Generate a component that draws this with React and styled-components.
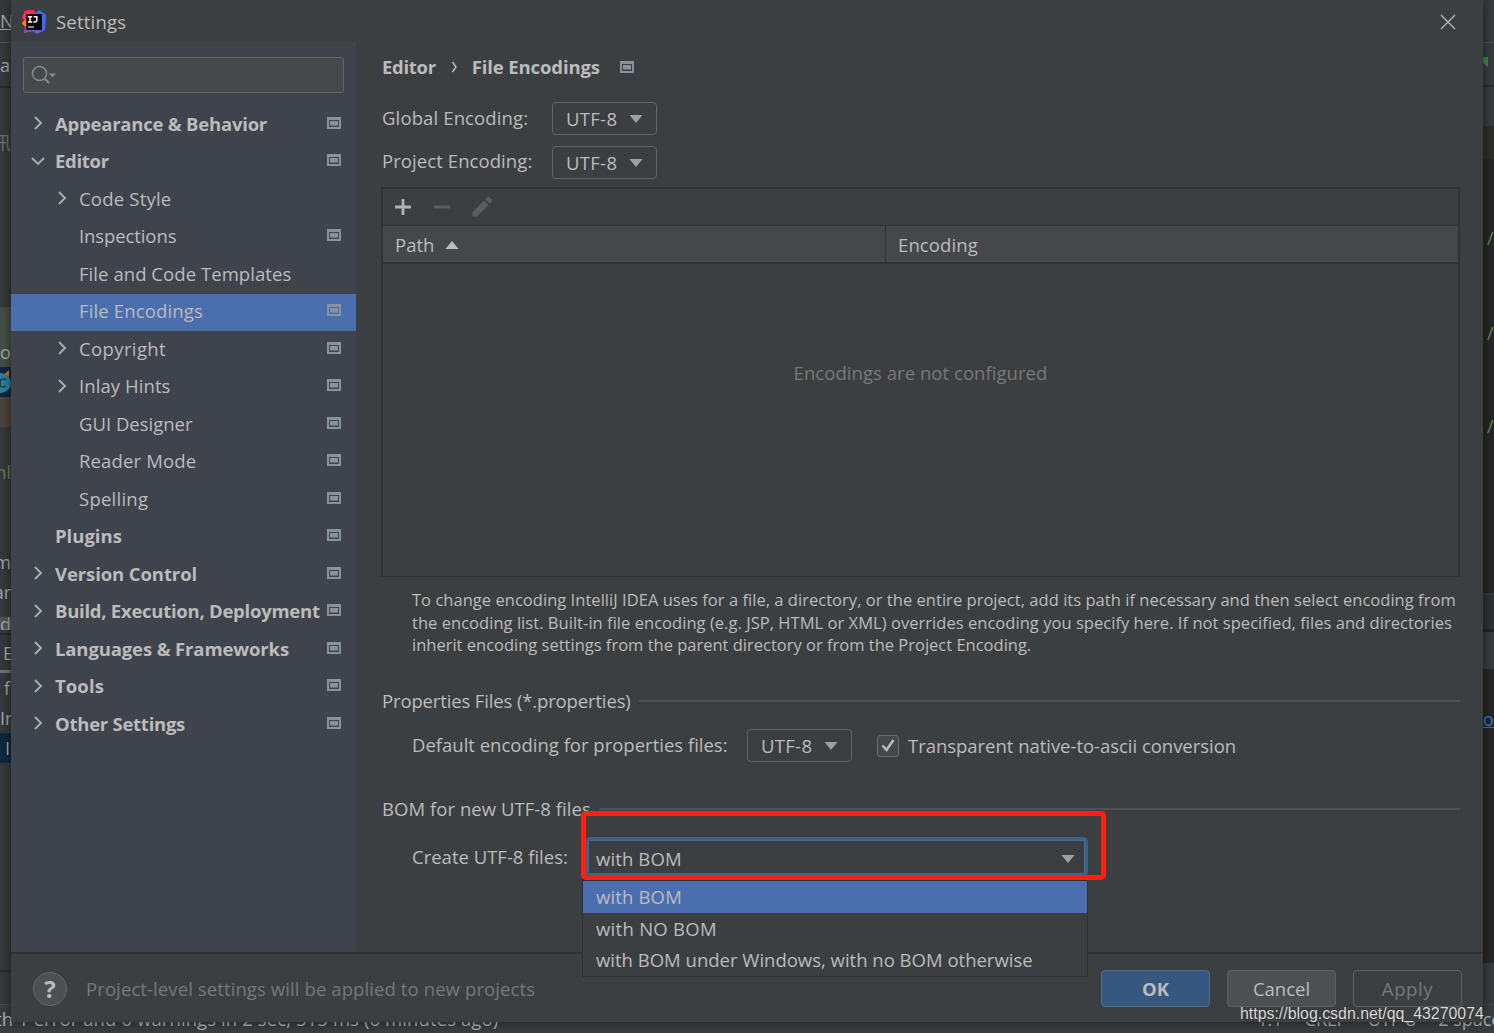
import React from 'react';
import styled, { createGlobalStyle } from 'styled-components';

const GlobalStyle = createGlobalStyle`
  * {
    box-sizing: border-box;
  }
  body {
    margin: 0;
    overflow: hidden;
    background: #3c3f41;
    color: #bbbbbb;
    font: 18.5px/24px 'Open Sans', 'Noto Sans', 'Noto Sans CJK SC', sans-serif;
  }
`;

/* Editor window behind the dialog */

const Ide = styled.div`
  position: relative;
  display: flex;
  flex-direction: column;
  width: 1494px;
  height: 1033px;
  overflow: hidden;
`;

const IdeBody = styled.div`
  display: flex;
  justify-content: space-between;
  height: 1004px;
`;

const Strip = styled.div`
  width: ${props => props.$width}px;
  overflow: hidden;
  background: ${props => props.$bg};
`;

const Band = styled.div`
  display: flex;
  align-items: center;
  justify-content: ${props => (props.$right ? 'flex-end' : 'flex-start')};
  height: ${props => props.$h}px;
  padding-left: ${props => props.$pad || 0}px;
  background: ${props => props.$bg || 'transparent'};
  color: ${props => props.$color || '#a5a7a8'};
  font-size: 18px;
  white-space: nowrap;
  overflow: hidden;
`;

const StatusBar = styled.div`
  display: flex;
  justify-content: space-between;
  height: 29px;
  padding-top: 2px;
  border-top: 1px solid #484a4b;
  background: #3a3d3f;
  color: #aeb0b1;
  font-size: 18px;
  white-space: nowrap;
`;

const StatusMessage = styled.span`
  margin-left: -5px;
  font-size: 18.5px;
  letter-spacing: 0.1px;
`;

const StatusCells = styled.span`
  display: flex;
  gap: 22px;
  margin-right: -16px;
`;

/* Dialog */

const Dialog = styled.div`
  position: absolute;
  top: 0;
  left: 11px;
  display: flex;
  flex-direction: column;
  width: 1472px;
  height: 1022px;
  background: #3c3f41;
  box-shadow: 0 0 10px rgba(0, 0, 0, 0.55);
`;

const TitleBar = styled.div`
  display: flex;
  align-items: center;
  height: 42px;
  padding: 1px 27px 0 11px;
`;

const Title = styled.span`
  flex: 1;
  padding-top: 1px;
  margin-left: 10px;
  letter-spacing: 0.2px;
`;

const Main = styled.div`
  display: flex;
  height: 910px;
`;

const Sidebar = styled.div`
  width: 345px;
  padding-top: 15px;
  background: #3f434c;
`;

const SearchBox = styled.div`
  display: flex;
  align-items: center;
  width: 321px;
  height: 36px;
  margin: 0 0 13px 12px;
  padding-left: 7px;
  border: 1px solid #646464;
  border-radius: 3px;
  background: #45494a;
`;

const TreeRow = styled.div`
  display: flex;
  align-items: center;
  height: 37.5px;
  padding: 0 15px 0 ${props => (props.$child ? 44 : 20)}px;
  background: ${props => (props.$selected ? '#4b6eaf' : 'transparent')};
  font-weight: ${props => (props.$child ? 400 : 700)};
  white-space: nowrap;
`;

const TreeArrow = styled.span`
  display: flex;
  width: 24px;
  padding-bottom: 3px;
`;

const TreeLabel = styled.span`
  flex: 1;
  padding-bottom: 2px;
  letter-spacing: ${props => props.$track || 0}px;
`;

const TreeScope = styled.span`
  display: flex;
  padding-bottom: 4px;
`;

const Page = styled.div`
  flex: 1;
  padding: 13px 23px 0 26px;
`;

const Breadcrumb = styled.div`
  display: flex;
  align-items: center;
  height: 24px;
  margin-bottom: 23px;
  font-weight: 700;
`;

const Crumb = styled.span`
  letter-spacing: ${props => props.$track || 0}px;
`;

const CrumbSeparator = styled.span`
  display: flex;
  width: 36px;
  padding-left: 15px;
`;

const CrumbScope = styled.span`
  display: flex;
  margin-left: 20px;
`;

const Field = styled.div`
  display: flex;
  align-items: center;
  height: 33px;
  margin-bottom: ${props => props.$gap || 0}px;
  padding-left: ${props => props.$indent || 0}px;
`;

const FieldLabel = styled.span`
  width: ${props => (props.$width ? `${props.$width}px` : 'auto')};
  padding-bottom: ${props => props.$lift || 0}px;
  letter-spacing: ${props => props.$track || 0}px;
  white-space: nowrap;
`;

const Combo = styled.div`
  display: flex;
  align-items: center;
  justify-content: space-between;
  width: 105px;
  height: 33px;
  padding: 1px 13px 0 13px;
  border: 1px solid #646464;
  border-radius: 4px;
  letter-spacing: 0.3px;
`;

const Checkbox = styled.span`
  display: flex;
  align-items: center;
  justify-content: center;
  width: 22px;
  height: 22px;
  margin: 0 9px 0 25px;
  border: 1px solid #6b6b6b;
  border-radius: 3px;
  background: #43494a;
`;

const Table = styled.div`
  display: flex;
  flex-direction: column;
  width: 1079px;
  height: 390px;
  margin: 8px 0 12px -1px;
  border: 2px solid #323232;
  border-bottom-width: 1px;
`;

const Toolbar = styled.div`
  display: flex;
  align-items: center;
  gap: 22px;
  height: 37px;
  padding-left: 11px;
  border-bottom: 1px solid #323232;
`;

const HeaderRow = styled.div`
  display: flex;
  height: 38px;
  border-bottom: 2px solid #323232;
  background: #45484a;
`;

const HeaderCell = styled.div`
  display: flex;
  align-items: center;
  gap: 11px;
  width: ${props => (props.$width ? `${props.$width}px` : 'auto')};
  padding: 2px 0 0 12px;
  border-right: ${props => (props.$width ? '1px solid #323232' : 'none')};
  letter-spacing: ${props => props.$track || 0}px;
`;

const EmptyText = styled.div`
  padding-top: 97px;
  color: #787878;
  letter-spacing: 0.05px;
  text-align: center;
`;

const Help = styled.div`
  height: 68px;
  margin-bottom: 32px;
  padding-left: 30px;
  font-size: 16.5px;
  line-height: 22.5px;
  white-space: nowrap;
`;

const HelpLine = styled.div`
  letter-spacing: ${props => props.$track || 0}px;
`;

const SectionTitle = styled.div`
  display: flex;
  align-items: center;
  gap: 8px;
  height: 24px;
  margin-bottom: ${props => props.$gap}px;
  letter-spacing: ${props => props.$track || 0}px;
  white-space: nowrap;

  &::after {
    content: '';
    flex: 1;
    height: 2px;
    background: #515151;
  }
`;

const BomField = styled.div`
  display: flex;
  align-items: center;
  height: 40px;
  padding-left: 30px;
`;

const BomSelect = styled.div`
  position: relative;
  width: 504px;
  height: 40px;
`;

const BomCombo = styled.div`
  display: flex;
  align-items: center;
  justify-content: space-between;
  width: 503px;
  height: 40px;
  padding: 3px 10px 0 8px;
  border: 3px solid #3d6185;
  border-radius: 5px;
  box-shadow: inset 0 0 0 1px #466d94;
  letter-spacing: 0.12px;
`;

const Popup = styled.div`
  position: absolute;
  top: 42px;
  left: -3px;
  z-index: 1;
  width: 506px;
  height: 98px;
  border: 1px solid #2f3030;
  border-top-width: 2px;
  background: #3c3f41;
`;

const Option = styled.div`
  height: ${props => (props.$selected ? 32 : 31)}px;
  padding: 4px 0 0 13px;
  background: ${props => (props.$selected ? '#4b6eaf' : 'transparent')};
  letter-spacing: ${props => props.$track || 0}px;
  white-space: nowrap;
`;

const Highlight = styled.div`
  position: absolute;
  top: -26px;
  left: -4px;
  z-index: 2;
  width: 525px;
  height: 69px;
  border: 5px solid #ff2013;
  border-radius: 5px;
`;

const Footer = styled.div`
  display: flex;
  align-items: center;
  height: 70px;
  padding: 2px 21px 0 22px;
  border-top: 2px solid #323232;
`;

const HelpButton = styled.span`
  display: flex;
  align-items: center;
  justify-content: center;
  width: 34px;
  height: 34px;
  border: 1px solid #656868;
  border-radius: 50%;
  background: #4c5052;
  font-size: 24px;
  font-weight: 700;
`;

const Hint = styled.span`
  flex: 1;
  margin-left: 19px;
  color: #777777;
  letter-spacing: 0.1px;
`;

const Button = styled.span`
  display: flex;
  align-items: center;
  justify-content: center;
  width: 109px;
  height: 37px;
  margin: 0 0 1px 17px;
  padding-top: 1px;
  border: 1px solid ${props => (props.$primary ? '#4c708c' : '#5e6060')};
  border-radius: 4px;
  background: ${props => (props.$primary ? '#365880' : props.$disabled ? 'transparent' : '#4c5052')};
  color: ${props => (props.$disabled ? '#777777' : '#bbbbbb')};
  font-weight: ${props => (props.$primary ? 700 : 400)};
  letter-spacing: ${props => props.$track || 0}px;
`;

const Watermark = styled.div`
  position: absolute;
  top: 1003px;
  left: 1240px;
  color: #d9dadb;
  font: 15.9px/22px 'Liberation Sans', sans-serif;
  text-shadow: 0 0 1px #222222;
  white-space: nowrap;
`;

/* Icons */

const IdeaLogo = () => (
  <svg width="24" height="24" viewBox="0 0 24 24">
    <defs>
      <linearGradient id="blue" x1="0" y1="1" x2="1" y2="0">
        <stop offset="0" stopColor="#a83bc8" />
        <stop offset="0.45" stopColor="#4b68f0" />
        <stop offset="1" stopColor="#2c72f6" />
      </linearGradient>
      <linearGradient id="warm" x1="0" y1="1" x2="0.4" y2="0">
        <stop offset="0" stopColor="#fc801d" />
        <stop offset="0.5" stopColor="#fe3155" />
        <stop offset="1" stopColor="#fe2857" />
      </linearGradient>
    </defs>
    <path d="M12 4L17 0L24 5L23 20L15 24L10 21L2 23L4 13Z" fill="url(#blue)" />
    <path d="M3 0.5L12 0L14 4L7 17L4 17L0 14L2 10L0 7Z" fill="url(#warm)" />
    <path d="M0 13L3 10L5 17L4 17.5Z" fill="#fc801d" />
    <path d="M4 16L8 19L10 21L2 23Z" fill="#a53ac6" />
    <rect x="4.3" y="4" width="15.7" height="16" fill="#050505" />
    <rect x="6" y="16.4" width="6" height="1.2" fill="#dddddd" />
    <path
      d="M5.8 6.7h4.4M8 6.7v5.3M5.8 12h4.4M11.6 6.7h3.2v3.6q0 1.7 -1.6 1.7h-1.8"
      fill="none"
      stroke="#ffffff"
      strokeWidth="1.5"
    />
  </svg>
);

const ScopeIcon = () => (
  <svg width="14" height="12" viewBox="0 0 14 12">
    <path d="M0 0H14V12H0ZM2 3V10H12V3Z" fill="#87939a" fillRule="evenodd" />
    <rect x="3" y="4" width="8" height="4.5" fill="#87939a" />
  </svg>
);

const ChevronIcon = ({ open }) => (
  <svg width="14" height="14" viewBox="0 0 14 14">
    <path
      d={open ? 'M1 4L7 10L13 4' : 'M4 1L10 7L4 13'}
      fill="none"
      stroke="#adadad"
      strokeWidth="1.9"
    />
  </svg>
);

const CrumbIcon = () => (
  <svg width="8" height="12" viewBox="0 0 8 12">
    <path d="M1.5 1L5 6L1.5 11" fill="none" stroke="#bbbbbb" strokeWidth="1.5" />
  </svg>
);

const Triangle = ({ up }) => (
  <svg width="14" height="8" viewBox="0 0 14 8">
    <path d={up ? 'M0.5 8L7 0L13.5 8Z' : 'M0.5 0H13.5L7 8Z'} fill={up ? '#bbbbbb' : '#9da0a2'} />
  </svg>
);

const SearchIcon = () => (
  <svg width="26" height="20" viewBox="0 0 26 20">
    <circle cx="8.5" cy="8.5" r="7" fill="none" stroke="#7f8b91" strokeWidth="1.6" />
    <path d="M13.3 13.3L18 18" stroke="#7f8b91" strokeWidth="2.2" />
    <path d="M18 8.5H25L21.5 12.5Z" fill="#7f8b91" />
  </svg>
);

const CloseIcon = () => (
  <svg width="16" height="16" viewBox="0 0 16 16">
    <path d="M1 1L15 15M15 1L1 15" stroke="#b4b5b6" strokeWidth="1.4" />
  </svg>
);

const PlusIcon = () => (
  <svg width="18" height="18" viewBox="0 0 18 18">
    <path d="M1 9H17M9 1V17" stroke="#afb1b3" strokeWidth="2.8" />
  </svg>
);

const MinusIcon = () => (
  <svg width="16" height="18" viewBox="0 0 16 18">
    <path d="M0 9H16" stroke="#5b5d5f" strokeWidth="2.8" />
  </svg>
);

const PencilIcon = () => (
  <svg width="21" height="23" viewBox="0 0 21 23">
    <path d="M0.5 20.5V16L12 4.5L16.5 9L5 20.5ZM13.3 3.2L15.5 1Q16.3 0.3 17 1L20 4Q20.6 4.7 20 5.5L17.8 7.7Z" fill="#5b5d5f" />
  </svg>
);

const CheckIcon = () => (
  <svg width="14" height="15" viewBox="0 0 14 15">
    <path d="M1.5 7.5L5.5 12L12.5 2" fill="none" stroke="#bbbbbb" strokeWidth="2.6" />
  </svg>
);

const ClassIcon = () => (
  <svg width="11" height="24" viewBox="0 0 11 24">
    <circle cx="1" cy="13" r="10" fill="#2d7f9d" />
    <path d="M6 10Q0 7 0 13Q0 19 6 16" fill="none" stroke="#24404d" strokeWidth="1.6" />
    <path d="M4.5 4L9 0V7Z" fill="#e4602c" />
  </svg>
);

const RunIcon = () => (
  <svg width="5" height="11" viewBox="0 0 5 11">
    <path d="M0 0H5V10.5L0 5.5Z" fill="#3c8a45" />
  </svg>
);

const tree = [
  { label: 'Appearance & Behavior', arrow: 'closed', scope: true, track: -0.22 },
  { label: 'Editor', arrow: 'open', scope: true, track: -0.3 },
  { label: 'Code Style', child: true, arrow: 'closed', track: 0.2 },
  { label: 'Inspections', child: true, scope: true, track: -0.1 },
  { label: 'File and Code Templates', child: true, track: 0.06 },
  { label: 'File Encodings', child: true, scope: true, selected: true, track: 0.14 },
  { label: 'Copyright', child: true, arrow: 'closed', scope: true, track: 0.38 },
  { label: 'Inlay Hints', child: true, arrow: 'closed', scope: true, track: 0.08 },
  { label: 'GUI Designer', child: true, scope: true },
  { label: 'Reader Mode', child: true, scope: true, track: 0.14 },
  { label: 'Spelling', child: true, scope: true, track: 0.25 },
  { label: 'Plugins', scope: true },
  { label: 'Version Control', arrow: 'closed', scope: true, track: -0.1 },
  { label: 'Build, Execution, Deployment', arrow: 'closed', scope: true, track: -0.26 },
  { label: 'Languages & Frameworks', arrow: 'closed', scope: true, track: -0.13 },
  { label: 'Tools', arrow: 'closed', scope: true, track: 0.1 },
  { label: 'Other Settings', arrow: 'closed', scope: true, track: -0.26 },
];

const LeftEdge = () => (
  <Strip $width={11} $bg="#36393b">
    <Band $h={42}><u>N</u></Band>
    <Band $h={1} $bg="#515151" />
    <Band $h={43}>ar</Band>
    <Band $h={2} $bg="#2b2b2b" />
    <Band $h={42} />
    <Band $h={26} $color="#6f7273" $right>讯</Band>
    <Band $h={151} />
    <Band $h={30} $bg="#454f45" />
    <Band $h={30} $bg="#454f45">o</Band>
    <Band $h={30} $bg="#0d293e"><ClassIcon /></Band>
    <Band $h={30} $bg="#4a443c" />
    <Band $h={30} />
    <Band $h={30} $color="#548a4b" $right>nl</Band>
    <Band $h={60} />
    <Band $h={30} $right>m</Band>
    <Band $h={30} $right>ar</Band>
    <Band $h={10} />
    <Band $h={13} $bg="#515354">d</Band>
    <Band $h={3} />
    <Band $h={2} $bg="#2b2b2b" />
    <Band $h={35} $pad={3}>E</Band>
    <Band $h={3} $bg="#707476" />
    <Band $h={30} $pad={4}>f</Band>
    <Band $h={30}>In</Band>
    <Band $h={30} $bg="#0d293e" $pad={5}>I</Band>
    <Band $h={207} />
    <Band $h={2} $bg="#2b2b2b" />
  </Strip>
);

const RightEdge = () => (
  <Strip $width={11} $bg="#262626">
    <Band $h={42} $bg="#393c3e" />
    <Band $h={1} $bg="#515151" />
    <Band $h={14} $bg="#393c3e" />
    <Band $h={11} $bg="#393c3e"><RunIcon /></Band>
    <Band $h={17} $bg="#393c3e" />
    <Band $h={2} $bg="#2b2b2b" />
    <Band $h={39} $bg="#393c3e" />
    <Band $h={33} $bg="#2d2d2c" />
    <Band $h={64} />
    <Band $h={30} $color="#628b58" $pad={4}>/</Band>
    <Band $h={65} />
    <Band $h={30} $color="#628b58" $pad={4}>/</Band>
    <Band $h={63} />
    <Band $h={30} $color="#628b58" $pad={4}>/</Band>
    <Band $h={152} />
    <Band $h={2} $bg="#3a3a3a" />
    <Band $h={34} $bg="#2e3031" />
    <Band $h={3} $bg="#222222" />
    <Band $h={37} $bg="#393b3c" />
    <Band $h={38} />
    <Band $h={24} $color="#287bde"><u>o</u></Band>
    <Band $h={232} />
    <Band $h={41} $bg="#393b3c" />
  </Strip>
);

const SettingsTree = () => (
  <Sidebar>
    <SearchBox><SearchIcon /></SearchBox>
    {tree.map(item => (
      <TreeRow key={item.label} $child={item.child} $selected={item.selected}>
        <TreeArrow>{item.arrow && <ChevronIcon open={item.arrow === 'open'} />}</TreeArrow>
        <TreeLabel $track={item.track}>{item.label}</TreeLabel>
        {item.scope && <TreeScope><ScopeIcon /></TreeScope>}
      </TreeRow>
    ))}
  </Sidebar>
);

const FileEncodings = () => (
  <Page>
    <Breadcrumb>
      <Crumb $track={-0.3}>Editor</Crumb>
      <CrumbSeparator><CrumbIcon /></CrumbSeparator>
      <Crumb $track={-0.13}>File Encodings</Crumb>
      <CrumbScope><ScopeIcon /></CrumbScope>
    </Breadcrumb>
    <Field $gap={11}>
      <FieldLabel $width={170} $lift={2} $track={0.13}>Global Encoding:</FieldLabel>
      <Combo>UTF-8 <Triangle /></Combo>
    </Field>
    <Field>
      <FieldLabel $width={170} $lift={3} $track={0.08}>Project Encoding:</FieldLabel>
      <Combo>UTF-8 <Triangle /></Combo>
    </Field>

    <Table>
      <Toolbar><PlusIcon /><MinusIcon /><PencilIcon /></Toolbar>
      <HeaderRow>
        <HeaderCell $width={503}>Path <Triangle up /></HeaderCell>
        <HeaderCell $track={0.12}>Encoding</HeaderCell>
      </HeaderRow>
      <EmptyText>Encodings are not configured</EmptyText>
    </Table>

    <Help>
      <HelpLine $track={0.035}>To change encoding IntelliJ IDEA uses for a file, a directory, or the entire project, add its path if necessary and then select encoding from</HelpLine>
      <HelpLine $track={0.04}>the encoding list. Built-in file encoding (e.g. JSP, HTML or XML) overrides encoding you specify here. If not specified, files and directories</HelpLine>
      <HelpLine>inherit encoding settings from the parent directory or from the Project Encoding.</HelpLine>
    </Help>

    <SectionTitle $gap={16} $track={-0.14}>Properties Files (*.properties)</SectionTitle>
    <Field $indent={30} $gap={35}>
      <FieldLabel $width={335} $lift={2}>Default encoding for properties files:</FieldLabel>
      <Combo>UTF-8 <Triangle /></Combo>
      <Checkbox><CheckIcon /></Checkbox>
      <FieldLabel $track={-0.03}>Transparent native-to-ascii conversion</FieldLabel>
    </Field>

    <SectionTitle $gap={16} $track={0.05}>BOM for new UTF-8 files</SectionTitle>
    <BomField>
      <FieldLabel $width={173}>Create UTF-8 files:</FieldLabel>
      <BomSelect>
        <BomCombo>with BOM <Triangle /></BomCombo>
        <Popup>
          <Option $selected $track={0.15}>with BOM</Option>
          <Option $track={0.28}>with NO BOM</Option>
          <Option>with BOM under Windows, with no BOM otherwise</Option>
        </Popup>
        <Highlight />
      </BomSelect>
    </BomField>
  </Page>
);

const App = () => (
  <React.Fragment>
    <GlobalStyle />
    <Ide>
      <IdeBody>
        <LeftEdge />
        <RightEdge />
      </IdeBody>
      <StatusBar>
        <StatusMessage>th 1 error and 0 warnings in 2 sec, 515 ms (6 minutes ago)</StatusMessage>
        <StatusCells><span>1:1</span><span>CRLF</span><span>UTF-8</span><span>2 spaces</span></StatusCells>
      </StatusBar>

      <Dialog>
        <TitleBar>
          <IdeaLogo />
          <Title>Settings</Title>
          <CloseIcon />
        </TitleBar>
        <Main>
          <SettingsTree />
          <FileEncodings />
        </Main>
        <Footer>
          <HelpButton>?</HelpButton>
          <Hint>Project-level settings will be applied to new projects</Hint>
          <Button $primary>OK</Button>
          <Button>Cancel</Button>
          <Button $disabled $track={0.6}>Apply</Button>
        </Footer>
      </Dialog>
      <Watermark>https://blog.csdn.net/qq_43270074</Watermark>
    </Ide>
  </React.Fragment>
);

export default App;
